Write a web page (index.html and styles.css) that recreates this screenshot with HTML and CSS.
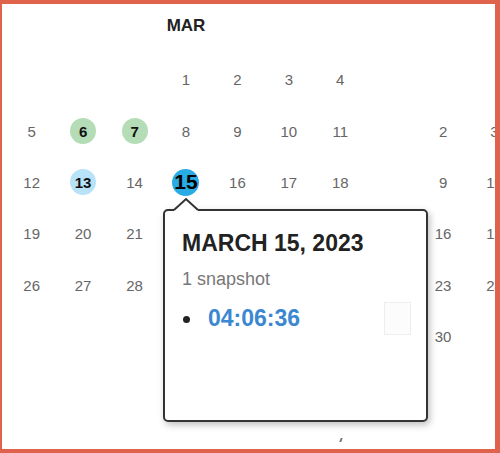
FILE: index.html
```html
<!DOCTYPE html>
<html lang="en">

<head>
    <meta charset="UTF-8">
    <meta name="viewport" content="width=device-width, initial-scale=1.0">
    <title>Snapshots calendar</title>
    <link rel="stylesheet" href="styles.css">
</head>

<body>
    <div class="frame">
        <div class="months">
            <div class="month">
                <div class="month-name">MAR</div>
                <div class="days">
                    <span></span><span></span><span></span>
                    <span>1</span><span>2</span><span>3</span><span>4</span>
                    <span>5</span><span><b class="dot green">6</b></span><span><b class="dot green">7</b></span>
                    <span>8</span><span>9</span><span>10</span><span>11</span>
                    <span>12</span><span><b class="dot light">13</b></span><span>14</span>
                    <span><b class="dot active">15</b></span><span>16</span><span>17</span><span>18</span>
                    <span>19</span><span>20</span><span>21</span>
                    <span class="under">22</span><span class="under">23</span><span class="under">24</span><span class="under">25</span>
                    <span>26</span><span>27</span><span>28</span>
                    <span class="under">29</span><span class="under">30</span><span class="under">31</span><span></span>
                </div>
            </div>
            <div class="month">
                <div class="month-name">APR</div>
                <div class="days">
                    <span></span><span></span><span></span><span></span><span></span><span></span><span>1</span>
                    <span>2</span><span>3</span><span>4</span><span>5</span><span>6</span><span>7</span><span>8</span>
                    <span>9</span><span>10</span><span>11</span><span>12</span><span>13</span><span>14</span><span>15</span>
                    <span>16</span><span>17</span><span>18</span><span>19</span><span>20</span><span>21</span><span>22</span>
                    <span>23</span><span>24</span><span>25</span><span>26</span><span>27</span><span>28</span><span>29</span>
                    <span>30</span>
                </div>
            </div>
        </div>

        <!-- popup over March 15 -->
        <div class="popup">
            <svg class="arrow" width="24" height="13" viewBox="0 0 24 13">
                <polygon points="0,13 0,12 12,1 24,12 24,13" fill="#fff" />
                <polyline points="0,12 12,1 24,12" fill="none" stroke="#333" stroke-width="2" />
            </svg>
            <div class="popup-title">MARCH 15, 2023</div>
            <div class="popup-count">1 snapshot</div>
            <ul class="snaps">
                <li><a href="#">04:06:36</a><span class="copy"></span></li>
            </ul>
        </div>
        <div class="tick"></div>
    </div>
</body>

</html>
```

FILE: styles.css
```css
* {
    margin: 0;
    padding: 0;
    box-sizing: border-box;
}

body {
    font-family: "Liberation Sans", Arial, sans-serif;
    background: #ffffff;
}

.frame {
    position: relative;
    width: 500px;
    height: 453px;
    border: solid #df634c;
    border-width: 4px 5px 4px 2px;
    overflow: hidden;
    background: #ffffff;
}

.months {
    display: flex;
    gap: 51.4px;
    padding-left: 4px;
}

.month {
    flex: 0 0 360px;
}

.month-name {
    height: 44px;
    line-height: 44px;
    margin-bottom: 6px;
    text-align: center;
    font-size: 17px;
    font-weight: bold;
    color: #222;
}

.days {
    display: grid;
    grid-template-columns: repeat(7, 1fr);
    grid-auto-rows: 51.4px;
}

.days>span {
    display: flex;
    align-items: center;
    justify-content: center;
    font-size: 15px;
    color: #666;
}

/* days hidden behind the popup */
.days>span.under {
    visibility: hidden;
}

.dot {
    width: 26px;
    height: 26px;
    border-radius: 50%;
    display: flex;
    align-items: center;
    justify-content: center;
    color: #111;
    font-weight: bold;
}

.dot.green {
    background: #b4dcb6;
}

.dot.light {
    background: #b7e2f8;
}

.dot.active {
    width: 27px;
    height: 27px;
    background: #29abe4;
    font-size: 21px;
    color: #000;
}

.popup {
    position: absolute;
    left: 161px;
    top: 205px;
    width: 265px;
    height: 213px;
    background: #ffffff;
    border: 2px solid #333;
    border-radius: 5px;
    box-shadow: 2px 3px 7px rgba(0, 0, 0, 0.25);
    padding: 18px 15px 0 17px;
}

.arrow {
    position: absolute;
    top: -13px;
    left: 9px;
    overflow: visible;
}

.popup-title {
    font-size: 23px;
    line-height: 28px;
    font-weight: bold;
    color: #222;
}

.popup-count {
    margin-top: 10px;
    font-size: 18px;
    line-height: 24px;
    color: #777;
}

.snaps {
    margin-top: 12px;
    list-style: none;
    padding-left: 1px;
}

.snaps li {
    display: flex;
    align-items: center;
    height: 30px;
}

.snaps li::before {
    content: "";
    width: 7px;
    height: 7px;
    margin: 3px 18px 0 0;
    border-radius: 50%;
    background: #222;
}

.snaps a {
    font-size: 23px;
    font-weight: bold;
    color: #3b87d1;
    text-decoration: none;
}

.copy {
    margin-left: auto;
    width: 27px;
    height: 33px;
    border: 1px solid #eeeeee;
    background: #fcfcfc;
}

.tick {
    position: absolute;
    left: 338px;
    top: 434px;
    width: 2px;
    height: 4px;
    background: #777;
    transform: skewX(-20deg);
}
```
